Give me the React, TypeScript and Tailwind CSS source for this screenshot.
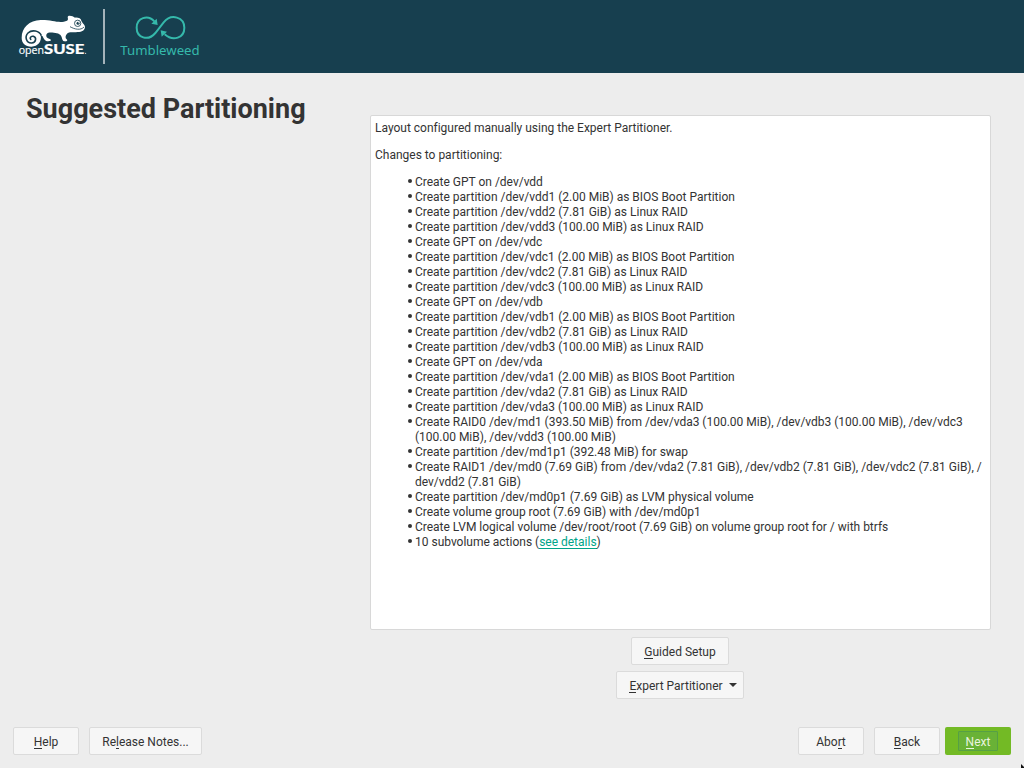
import React from "react";

const disks = ["vdd", "vdc", "vdb", "vda"];

const actions: string[] = [
  ...disks.flatMap((d) => [
    `Create GPT on /dev/${d}`,
    `Create partition /dev/${d}1 (2.00 MiB) as BIOS Boot Partition`,
    `Create partition /dev/${d}2 (7.81 GiB) as Linux RAID`,
    `Create partition /dev/${d}3 (100.00 MiB) as Linux RAID`,
  ]),
  "Create RAID0 /dev/md1 (393.50 MiB) from /dev/vda3 (100.00 MiB), /dev/vdb3 (100.00 MiB), /dev/vdc3\n(100.00 MiB), /dev/vdd3 (100.00 MiB)",
  "Create partition /dev/md1p1 (392.48 MiB) for swap",
  "Create RAID1 /dev/md0 (7.69 GiB) from /dev/vda2 (7.81 GiB), /dev/vdb2 (7.81 GiB), /dev/vdc2 (7.81 GiB), /\ndev/vdd2 (7.81 GiB)",
  "Create partition /dev/md0p1 (7.69 GiB) as LVM physical volume",
  "Create volume group root (7.69 GiB) with /dev/md0p1",
  "Create LVM logical volume /dev/root/root (7.69 GiB) on volume group root for / with btrfs",
];

function Item({ children }: { children: React.ReactNode }) {
  return (
    <li className="flex whitespace-pre">
      <span className="mt-1 mr-[3px] h-1 w-1 shrink-0 rounded-full bg-[#333]" />
      <span>{children}</span>
    </li>
  );
}

function Label({ pre = "", hot, post }: { pre?: string; hot: string; post: string }) {
  return (
    <span className="whitespace-pre">
      {pre}
      <span className="inline-block h-[14px] border-b border-current">{hot}</span>
      {post}
    </span>
  );
}

const button =
  "flex h-7 items-center justify-center rounded-[2px] border border-[#dbdbdb] bg-[#f6f6f6] pt-[3px]";

function OpenSuseLogo() {
  return (
    <svg className="h-[67px] w-[90px] shrink-0" viewBox="0 0 270 201">
      <path
        fill="#fff"
        d="M35 98C35 68 58 46 92 45C128 44 148 57 171 47C178 43 170 37 175 33C182 31 190 35 195 38C205 37 213 41 214 47C216 53 224 58 225 65C225 76 216 80 203 81C188 83 177 79 171 86C166 92 165 99 170 103C174 106 171 110 166 109C155 109 158 100 153 92C147 84 130 82 115 83C106 87 108 96 114 100L121 103C125 107 122 109 114 109C104 109 101 101 98 94L92 91C96 109 84 125 64 125C46 125 35 114 35 98Z"
      />
      <path
        d="M94 92C88 77 66 73 54 84C43 95 49 115 65 114C78 113 81 98 70 94C62 92 57 101 64 104"
        fill="none"
        stroke="#173f4f"
        strokeWidth="4.8"
      />
      <circle cx="203" cy="55" r="9.5" fill="none" stroke="#173f4f" strokeWidth="2.5" />
      <circle cx="204" cy="55" r="4.5" fill="#173f4f" />
      <circle cx="206" cy="53" r="1.6" fill="#fff" />
      <path d="M222 66C212 77 194 73 180 65" fill="none" stroke="#173f4f" strokeWidth="2.4" />
      <text x="26" y="148" textLength="76" lengthAdjust="spacingAndGlyphs" fill="#fff" stroke="#fff" strokeWidth=".5" fontFamily="'Open Sans', sans-serif" fontSize="33">open</text>
      <text x="102" y="148" textLength="121" lengthAdjust="spacingAndGlyphs" fill="#fff" stroke="#fff" strokeWidth=".5" fontFamily="Lato, sans-serif" fontWeight="900" fontSize="37">SUSE</text>
      <circle cx="227" cy="145" r="1.7" fill="#fff" />
    </svg>
  );
}

function TumbleweedLogo() {
  return (
    <svg className="h-[67px] w-[110px] shrink-0" viewBox="12 0 330 201">
      <g fill="none" stroke="#35b9ab" strokeWidth="6">
        <path d="M163 49C143 27 110 39 110 68C110 98 144 110 166 84L191 52C214 24 253 37 253 68C253 98 220 111 194 88" />
      </g>
      <path fill="#35b9ab" d="M170 41L173 60L154 56ZM185 95L182 76L201 80Z" />
      <text x="61" y="150" textLength="238" lengthAdjust="spacingAndGlyphs" fill="#35b9ab" fontFamily="'Noto Sans', sans-serif" fontSize="40">Tumbleweed</text>
    </svg>
  );
}

export default function App() {
  return (
    <div className="relative flex h-[768px] w-[1024px] flex-col overflow-hidden bg-[#ededed] font-['Roboto',sans-serif] text-[12px] leading-[15px] text-[#333]">
      <header className="flex h-[73px] shrink-0 bg-[#173f4f] pt-[5px] pl-2.5">
        <OpenSuseLogo />
        <div className="mt-1 mr-[-1px] ml-[3px] h-[55px] w-[2px] shrink-0 bg-[#a4b3ba]" />
        <TumbleweedLogo />
      </header>

      <div className="flex shrink-0">
        <h1 className="w-[370px] shrink-0 pt-5 pl-[26px] text-[27px] leading-8 font-bold">
          Suggested Partitioning
        </h1>
        <main className="flex w-[621px] flex-col items-center pt-[42px]">
          <section className="h-[515px] w-full rounded-[2px] border border-[#d8d8d8] bg-white pt-[5px] pl-1 tracking-[-0.008px]">
            <p>Layout configured manually using the Expert Partitioner.</p>
            <p className="mt-3">Changes to partitioning:</p>
            <ul className="mt-3 ml-[33px]">
              {actions.map((a) => (
                <Item key={a}>{a}</Item>
              ))}
              <Item>
                10 subvolume actions (
                <a className="inline-block h-[14px] border-b border-[#00a489] text-[#00a489]">see details</a>)
              </Item>
            </ul>
          </section>
          <div className="mr-px flex flex-col items-center">
            <button className={`${button} mt-[7px] w-[98px]`}>
              <Label hot="G" post="uided Setup" />
            </button>
            <button className={`${button} mt-1.5 w-32 gap-[6px] pl-[6px]`}>
              <Label hot="E" post="xpert Partitioner" />
              <svg className="mb-1 h-1 w-2" viewBox="0 0 8 4">
                <path d="M0 0h8L4 4z" fill="#333" />
              </svg>
            </button>
          </div>
        </main>
      </div>

      <footer className="mt-auto mb-[13px] flex px-[13px]">
        <button className={`${button} w-[66px]`}>
          <Label hot="H" post="elp" />
        </button>
        <button className={`${button} ml-2.5 w-[113px]`}>
          <Label pre="Re" hot="l" post="ease Notes..." />
        </button>
        <button className={`${button} ml-auto w-[66px]`}>
          <Label pre="Abo" hot="r" post="t" />
        </button>
        <button className={`${button} ml-2.5 w-[66px]`}>
          <Label hot="B" post="ack" />
        </button>
        <button className="ml-[5px] flex h-7 w-[66px] items-center justify-center rounded-[2px] bg-[#73ba25] text-[#eaf4df]">
          <span className="flex h-5 w-10 items-center justify-center rounded-[1px] border border-[#56a045] bg-[#69b236] pt-[3px]">
            <Label hot="N" post="ext" />
          </span>
        </button>
      </footer>
      <svg className="absolute right-0 bottom-0 h-1 w-[3px]" viewBox="0 0 3 4">
        <path d="M0 0L3 3V4H0Z" fill="#111" />
      </svg>
    </div>
  );
}
